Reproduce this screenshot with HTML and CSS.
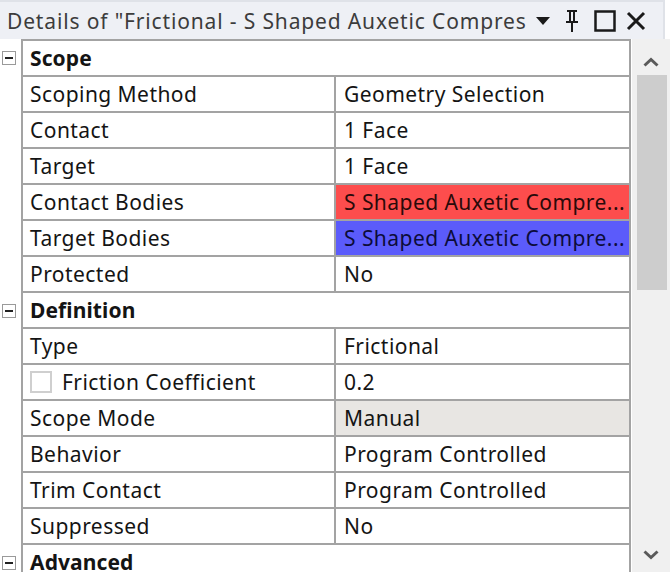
FILE: index.html
```html
<!DOCTYPE html>
<html>
<head>
<meta charset="utf-8">
<link rel="stylesheet" href="styles.css">
</head>
<body>
<div class="panel">
  <div class="titlebar">
    <div class="title">Details of "Frictional - S Shaped Auxetic Compression</div>
    <div class="tools">
      <svg class="ico" width="16" height="10" viewBox="0 0 16 10"><path d="M1 1h14L8 9z" fill="#1a1a1a"/></svg>
      <svg class="ico" width="16" height="26" viewBox="0 0 16 26"><path d="M3 2h10v2H11v9h3v2H9v9H7v-9H2v-2h3V4H3z M7 4v9h2V4z" fill="#1a1a1a" fill-rule="evenodd"/></svg>
      <svg class="ico" width="22" height="22" viewBox="0 0 22 22"><rect x="1.5" y="1.5" width="19" height="19" fill="none" stroke="#1a1a1a" stroke-width="2.5"/></svg>
      <svg class="ico" width="20" height="20" viewBox="0 0 20 20"><path d="M2 2L18 18M18 2L2 18" stroke="#1a1a1a" stroke-width="3"/></svg>
    </div>
  </div>
  <div class="body">
    <div class="grid">
      <div class="row section"><div class="gut"><span class="box"></span></div><div class="cell head">Scope</div></div>
      <div class="row"><div class="gut"></div><div class="cell name">Scoping Method</div><div class="cell val">Geometry Selection</div></div>
      <div class="row"><div class="gut"></div><div class="cell name">Contact</div><div class="cell val">1 Face</div></div>
      <div class="row"><div class="gut"></div><div class="cell name">Target</div><div class="cell val">1 Face</div></div>
      <div class="row"><div class="gut"></div><div class="cell name">Contact Bodies</div><div class="cell val red">S Shaped Auxetic Compre...</div></div>
      <div class="row"><div class="gut"></div><div class="cell name">Target Bodies</div><div class="cell val blue">S Shaped Auxetic Compre...</div></div>
      <div class="row"><div class="gut"></div><div class="cell name">Protected</div><div class="cell val">No</div></div>
      <div class="row section"><div class="gut"><span class="box"></span></div><div class="cell head">Definition</div></div>
      <div class="row"><div class="gut"></div><div class="cell name">Type</div><div class="cell val">Frictional</div></div>
      <div class="row"><div class="gut"></div><div class="cell name"><span class="check"></span>Friction Coefficient</div><div class="cell val">0.2</div></div>
      <div class="row"><div class="gut"></div><div class="cell name">Scope Mode</div><div class="cell val grey">Manual</div></div>
      <div class="row"><div class="gut"></div><div class="cell name">Behavior</div><div class="cell val">Program Controlled</div></div>
      <div class="row"><div class="gut"></div><div class="cell name">Trim Contact</div><div class="cell val">Program Controlled</div></div>
      <div class="row"><div class="gut"></div><div class="cell name">Suppressed</div><div class="cell val">No</div></div>
      <div class="row section"><div class="gut"><span class="box"></span></div><div class="cell head">Advanced</div></div>
    </div>
    <div class="scrollbar">
      <svg class="arrow" width="16" height="10" viewBox="0 0 16 10"><path d="M1.5 8.5L8 2.5l6.5 6" fill="none" stroke="#5a5a5a" stroke-width="3"/></svg>
      <div class="thumb"></div>
      <div class="track"></div>
      <svg class="arrow" width="16" height="10" viewBox="0 0 16 10"><path d="M1.5 1.5L8 7.5l6.5-6" fill="none" stroke="#5a5a5a" stroke-width="3"/></svg>
    </div>
  </div>
</div>
</body>
</html>
```
FILE: styles.css
```css
html, body {
  margin: 0;
  padding: 0;
  background: #ffffff;
}
body {
  width: 670px;
  height: 572px;
  overflow: hidden;
  font-family: "Noto Sans", "Open Sans", sans-serif;
  color: #141414;
}
.panel {
  width: 670px;
  height: 572px;
  display: flex;
  flex-direction: column;
}
.titlebar {
  height: 39px;
  flex: none;
  box-sizing: border-box;
  border-top: 2px solid #dfe2e8;
  background: #eef0f5;
  display: flex;
  align-items: center;
  padding-left: 7px;
  margin-right: 5px;
  border-right: 2px solid #dfe2e8;
}
.title {
  width: 520px;
  white-space: nowrap;
  overflow: hidden;
  font-size: 21px;
  color: #3c3c3c;
  letter-spacing: 0.85px;
}
.tools {
  display: flex;
  align-items: center;
  gap: 0;
  margin-left: 8px;
}
.tools .ico { display: block; }
.tools .ico:nth-child(1) { margin-right: 13px; }
.tools .ico:nth-child(2) { margin-right: 14px; }
.tools .ico:nth-child(3) { margin-right: 10px; }
.body {
  flex: 1;
  display: flex;
  min-height: 0;
}
.grid {
  width: 632px;
  flex: none;
}
.row {
  display: grid;
  grid-template-columns: 21px 315px 295px;
  height: 36px;
}
.row:first-child .cell { border-top: 2px solid #a3a3a3; }
.row:first-child { height: 38px; }
.row.section {
  grid-template-columns: 21px 610px;
}
.gut {
  display: flex;
  align-items: center;
  padding-left: 2px;
}
.box {
  width: 12px;
  height: 12px;
  border: 1px solid #9a9a9a;
  background: #fff;
  position: relative;
}
.box::after {
  content: "";
  position: absolute;
  left: 2px;
  top: 5px;
  width: 8px;
  height: 2px;
  background: #222;
}
.cell {
  box-sizing: border-box;
  border-bottom: 2px solid #a3a3a3;
  border-right: 2px solid #a3a3a3;
  display: flex;
  align-items: center;
  font-size: 21px;
  letter-spacing: 0.45px;
  white-space: nowrap;
  overflow: hidden;
}
.head {
  border-left: 2px solid #a3a3a3;
  padding-left: 7px;
  font-weight: bold;
  letter-spacing: 0.1px;
}
.name {
  border-left: 2px solid #a3a3a3;
  padding-left: 7px;
}
.val {
  padding-left: 8px;
}
.red { background: #fd4d4d; color: #2a0a0a; }
.blue { background: #5b5bfb; color: #0c0c3a; }
.grey { background: #e8e6e3; }
.check {
  width: 18px;
  height: 18px;
  border: 2px solid #cfcfcf;
  margin-right: 10px;
  margin-left: 0;
  flex: none;
}
.scrollbar {
  width: 38px;
  flex: none;
  background: #f0f0f0;
  display: flex;
  flex-direction: column;
  align-items: center;
  padding-top: 18px;
  box-sizing: border-box;
}
.arrow { display: block; flex: none; }
.thumb {
  margin-top: 8px;
  width: 30px;
  height: 215px;
  background: #cdcdcd;
  margin-left: 2px;
  flex: none;
}
.track { flex: 1; }
.scrollbar .arrow:last-child { margin-bottom: 12px; }
```
